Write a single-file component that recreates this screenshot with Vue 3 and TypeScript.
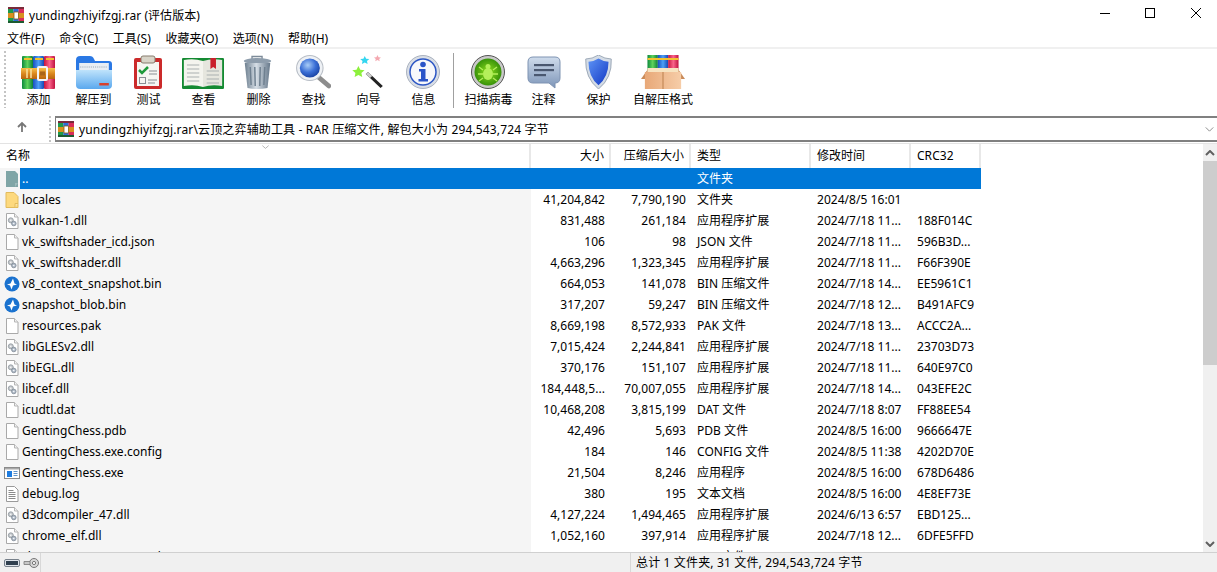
<script setup lang="ts">
interface Row { name: string; size: string; packed: string; type: string; time: string; crc: string; icon: string }
const r = (name: string, size: string, packed: string, type: string, time: string, crc: string, icon: string): Row => ({ name, size, packed, type, time, crc, icon })
const ext = '应用程序扩展'
const rows: Row[] = [
  r('locales', '41,204,842', '7,790,190', '文件夹', '2024/8/5 16:01', '', 'folder'),
  r('vulkan-1.dll', '831,488', '261,184', ext, '2024/7/18 11...', '188F014C', 'dll'),
  r('vk_swiftshader_icd.json', '106', '98', 'JSON 文件', '2024/7/18 11...', '596B3D...', 'file'),
  r('vk_swiftshader.dll', '4,663,296', '1,323,345', ext, '2024/7/18 11...', 'F66F390E', 'dll'),
  r('v8_context_snapshot.bin', '664,053', '141,078', 'BIN 压缩文件', '2024/7/18 14...', 'EE5961C1', 'bin'),
  r('snapshot_blob.bin', '317,207', '59,247', 'BIN 压缩文件', '2024/7/18 12...', 'B491AFC9', 'bin'),
  r('resources.pak', '8,669,198', '8,572,933', 'PAK 文件', '2024/7/18 13...', 'ACCC2A...', 'file'),
  r('libGLESv2.dll', '7,015,424', '2,244,841', ext, '2024/7/18 11...', '23703D73', 'dll'),
  r('libEGL.dll', '370,176', '151,107', ext, '2024/7/18 11...', '640E97C0', 'dll'),
  r('libcef.dll', '184,448,5...', '70,007,055', ext, '2024/7/18 14...', '043EFE2C', 'dll'),
  r('icudtl.dat', '10,468,208', '3,815,199', 'DAT 文件', '2024/7/18 8:07', 'FF88EE54', 'file'),
  r('GentingChess.pdb', '42,496', '5,693', 'PDB 文件', '2024/8/5 16:00', '9666647E', 'file'),
  r('GentingChess.exe.config', '184', '146', 'CONFIG 文件', '2024/8/5 11:38', '4202D70E', 'file'),
  r('GentingChess.exe', '21,504', '8,246', '应用程序', '2024/8/5 16:00', '678D6486', 'exe'),
  r('debug.log', '380', '195', '文本文档', '2024/8/5 16:00', '4E8EF73E', 'txt'),
  r('d3dcompiler_47.dll', '4,127,224', '1,494,465', ext, '2024/6/13 6:57', 'EBD125...', 'dll'),
  r('chrome_elf.dll', '1,052,160', '397,914', ext, '2024/7/18 12...', '6DFE5FFD', 'dll'),
  r('chrome_100_percent.pak', '', '', 'PAK 文件', '', '', 'file'),
]
const menus = ['文件(F)', '命令(C)', '工具(S)', '收藏夹(O)', '选项(N)', '帮助(H)']
const tools1 = ['add', 'extract', 'test', 'view', 'delete', 'find', 'wizard', 'info']
const tools2 = ['scan', 'comment', 'protect', 'sfx']
const labels: Record<string, string> = { add: '添加', extract: '解压到', test: '测试', view: '查看', delete: '删除', find: '查找', wizard: '向导', info: '信息', scan: '扫描病毒', comment: '注释', protect: '保护', sfx: '自解压格式' }
</script>

<template>
  <div class="win">
    <svg class="sprite" aria-hidden="true">
      <defs>
        <linearGradient id="gG" x1="0" x2="1" y1="0" y2="0"><stop offset="0" stop-color="#0d8a3c"/><stop offset=".5" stop-color="#5fd35c"/><stop offset="1" stop-color="#0e7f38"/></linearGradient>
        <linearGradient id="gB" x1="0" x2="1" y1="0" y2="0"><stop offset="0" stop-color="#1a4fc0"/><stop offset=".5" stop-color="#4ea0f5"/><stop offset="1" stop-color="#1747b5"/></linearGradient>
        <linearGradient id="gR" x1="0" x2="1" y1="0" y2="0"><stop offset="0" stop-color="#c8153f"/><stop offset=".5" stop-color="#f9648a"/><stop offset="1" stop-color="#c01240"/></linearGradient>
        <linearGradient id="gO" x1="0" x2="0" y1="0" y2="1"><stop offset="0" stop-color="#f6c04a"/><stop offset=".55" stop-color="#d8841c"/><stop offset="1" stop-color="#b8660f"/></linearGradient>
        <linearGradient id="gF" x1="0" x2="0" y1="0" y2="1"><stop offset="0" stop-color="#bfe3fb"/><stop offset="1" stop-color="#5aa8ee"/></linearGradient>
        <linearGradient id="gT" x1="0" x2="1" y1="0" y2="0"><stop offset="0" stop-color="#6d7f8f"/><stop offset=".45" stop-color="#d6dee6"/><stop offset="1" stop-color="#66788a"/></linearGradient>
        <linearGradient id="gS" x1="0" x2="0" y1="0" y2="1"><stop offset="0" stop-color="#cfdcec"/><stop offset="1" stop-color="#7d95b8"/></linearGradient>
        <linearGradient id="gH" x1="0" x2="1" y1="0" y2="1"><stop offset="0" stop-color="#5d93f5"/><stop offset="1" stop-color="#1238c4"/></linearGradient>
        <radialGradient id="gL" cx=".4" cy=".35" r=".7"><stop offset="0" stop-color="#a9cdf7"/><stop offset=".55" stop-color="#3b6fd6"/><stop offset="1" stop-color="#17409f"/></radialGradient>
        <radialGradient id="gV" cx=".5" cy=".5" r=".55"><stop offset="0" stop-color="#8fe01c"/><stop offset="1" stop-color="#2f8a08"/></radialGradient>
        <linearGradient id="gK" x1="0" x2="1" y1="0" y2="0"><stop offset="0" stop-color="#e8a878"/><stop offset="1" stop-color="#f6cda8"/></linearGradient>
      </defs>
      <symbol id="rar" viewBox="0 0 16 16">
        <rect x="0" y="0" width="5.4" height="16" fill="#1e9a4a"/><rect x="5.3" y="0" width="5.4" height="16" fill="#2a6fd8"/><rect x="10.6" y="0" width="5.4" height="16" fill="#d92c58"/>
        <rect x="0" y="0" width="16" height="2" fill="#7a2b3a"/><rect x="0" y="14" width="16" height="2" fill="#1c5a30"/>
        <rect x="0" y="6" width="16" height="5" fill="#d8901f"/><rect x="6" y="5" width="4.5" height="7" fill="#fff" stroke="#8d5a10" stroke-width=".8"/>
      </symbol>
      <symbol id="folder" viewBox="0 0 16 16">
        <path d="M2 0.5h8l4 4v11H2z" fill="#fdd97d" stroke="#e2bb5c"/><path d="M11 15.500v-4h3" fill="#fbe7a8" stroke="#e2bb5c"/>
      </symbol>
      <symbol id="up" viewBox="0 0 16 16">
        <path d="M2 0h9l3 3v13H2z" fill="#7fa5a6"/><path d="M11 16v-4h3" fill="#9dbabb"/>
      </symbol>
      <symbol id="file" viewBox="0 0 16 16">
        <path d="M2.500 .5h8l3.500 3.500v11.500h-11.500z" fill="#fff" stroke="#a9a9a9"/><path d="M10.500 .5v3.500h3.500" fill="#f2f2f2" stroke="#b5b5b5"/>
      </symbol>
      <symbol id="dll" viewBox="0 0 16 16">
        <path d="M2.500 .5h8l3.500 3.500v11.500h-11.500z" fill="#fff" stroke="#a9a9a9"/><path d="M10.500 .5v3.500h3.500" fill="#f2f2f2" stroke="#b5b5b5"/>
        <circle cx="6.800" cy="7.300" r="2.500" fill="#c4c8cc" stroke="#8e959c" stroke-width=".8"/><circle cx="9.800" cy="10.500" r="2.300" fill="#aeb9c6" stroke="#7d8894" stroke-width=".8"/><circle cx="6.800" cy="7.300" r=".8" fill="#fff"/><circle cx="9.800" cy="10.500" r=".7" fill="#fff"/>
      </symbol>
      <symbol id="bin" viewBox="0 0 16 16">
        <circle cx="8" cy="8" r="7.500" fill="#1a72cf"/><path d="M9 2.500L10.500 7.500 13 8.500 9 9.500 7.500 13.500 6 9.500 3 8.500 6.500 7.500z" fill="#fff"/>
      </symbol>
      <symbol id="exe" viewBox="0 0 16 16">
        <rect x=".5" y="2.500" width="15" height="11" fill="#fff" stroke="#8b8b8b"/><rect x="1" y="3" width="14" height="1.500" fill="#a8a8a8"/><rect x="3" y="6" width="5" height="6" fill="#1d7ce0"/><path d="M9.500 6.500h4M9.500 8.500h4M9.500 10.500h4" stroke="#5f93c9"/>
      </symbol>
      <symbol id="txt" viewBox="0 0 16 16">
        <path d="M2.500 .5h8l3.500 3.500v11.500h-11.500z" fill="#fff" stroke="#9a9a9a"/><path d="M4.500 4.500h5M4.500 6.500h7M4.500 8.500h7M4.500 10.500h7M4.500 12.500h7" stroke="#8a8a8a"/>
      </symbol>
    </svg>

    <header class="title">
      <svg class="ico16"><use href="#rar"/></svg>
      <span class="title-text">yundingzhiyifzgj.rar (评估版本)</span>
      <div class="caps">
        <svg class="cap" viewBox="0 0 46 30"><path d="M19 13.500h10" stroke="#000" fill="none"/></svg>
        <svg class="cap" viewBox="0 0 46 30"><rect x="18.500" y="8.500" width="9" height="9" stroke="#000" fill="none"/></svg>
        <svg class="cap" viewBox="0 0 46 30"><path d="M18 8l10 10M28 8L18 18" stroke="#000" fill="none"/></svg>
      </div>
    </header>

    <nav class="menu"><span v-for="m in menus" :key="m" class="menu-item">{{ m }}</span></nav>

    <section class="toolbar">
      <div class="grip"></div>
      <div v-for="t in tools1" :key="t" class="tool">
        <svg class="big" :class="'w-' + t" viewBox="0 0 34 34" preserveAspectRatio="none">
          <g v-if="t === 'add'">
            <rect x="1" y="1" width="11" height="33" rx="1" fill="url(#gG)"/><rect x="12" y="1" width="11" height="33" rx="1" fill="url(#gB)"/><rect x="23" y="1" width="11" height="33" rx="1" fill="url(#gR)"/>
            <rect x="3" y="3" width="8" height="2" fill="#f2c230"/><rect x="14" y="3" width="8" height="2" fill="#f2c230"/><rect x="25" y="3" width="8" height="2" fill="#f2c230"/>
            <rect x="0" y="13" width="34" height="11" fill="url(#gO)"/><path d="M6 14v9M10 14v9" stroke="#fbe2a2" stroke-width="1.500"/>
            <rect x="17" y="12" width="9" height="13" rx="1" fill="none" stroke="#f4f4f4" stroke-width="2"/><rect x="19" y="16.500" width="5" height="4" fill="#a9651a"/>
          </g>
          <g v-else-if="t === 'extract'">
            <path d="M0 5q0-4 4-4h9q3 0 4 3l1 2h13q3 0 3 3v8H0z" fill="#2a78e4"/>
            <rect x="3" y="8" width="28" height="12" fill="#e9eef4"/><path d="M4 12h26" stroke="#9aa7b4" stroke-dasharray="1 1"/>
            <path d="M0 15h34v15q0 4-4 4H4q-4 0-4-4z" fill="url(#gF)"/><rect x="22" y="28" width="9" height="2.500" fill="#d8412c"/>
          </g>
          <g v-else-if="t === 'test'">
            <rect x="3" y="3" width="28" height="31" rx="2" fill="#cb2a2a"/>
            <rect x="6" y="7" width="22" height="24" fill="#f6f6f2"/><rect x="10" y="1" width="14" height="7" rx="2" fill="#d8d4c8" stroke="#877d6e"/>
            <path d="M8 15l3 3 6-6" stroke="#1f9a3a" stroke-width="2.500" fill="none"/><path d="M18 16h8M18 19h8" stroke="#8a8f94"/>
            <rect x="8.500" y="22.500" width="6" height="6" fill="none" stroke="#8a8f94"/><path d="M17 25h9M17 28h7" stroke="#8a8f94"/>
          </g>
          <g v-else-if="t === 'view'">
            <rect x="0" y="3" width="34" height="31" fill="#148a32" rx="1"/>
            <path d="M1.500 5q8-2 15.500 1v26q-7-3-15.500-1z" fill="#f4f4ee"/><path d="M32.500 5q-8-2-15.500 1v26q7-3 15.500-1z" fill="#e6e6de"/>
            <path d="M4 10h10M4 14h10M4 18h10M4 22h10M4 26h10M20 16h10M20 20h10M20 24h10M20 28h10" stroke="#aab0b0"/><path d="M23 3h4.500v11l-2.250-2-2.250 2z" fill="#c9202c"/>
          </g>
          <g v-else-if="t === 'delete'">
            <path d="M11 4V1.500h11V4" fill="none" stroke="#7d8b99" stroke-width="1.500"/><ellipse cx="17" cy="6" rx="15" ry="3" fill="#8e9dac"/>
            <path d="M3 8h28l-3 25q-11 2-22 0z" fill="url(#gT)"/><path d="M9 12l1 18M14 12l.5 19M20 12l-.5 19M25 12l-1 18" stroke="#6f8090" stroke-width="1.600"/>
          </g>
          <g v-else-if="t === 'find'">
            <path d="M22 22l10 9" stroke="#8d8d8d" stroke-width="4.500" stroke-linecap="round"/>
            <circle cx="14" cy="13" r="12.500" fill="#eef1f5" stroke="#b8bec6"/><circle cx="14" cy="13" r="9.500" fill="url(#gL)"/>
          </g>
          <g v-else-if="t === 'wizard'">
            <path d="M15 18l14 14" stroke="#222" stroke-width="3"/><path d="M15 18l4 4" stroke="#ccc" stroke-width="3"/>
            <path d="M7 11l1.800 3.700 4 .5-3 2.800.8 4-3.600-2-3.600 2 .8-4-3-2.800 4-.5z" fill="#8df03c"/>
            <path d="M13 1l1.300 2.700 3 .4-2.200 2 .6 3-2.700-1.500-2.700 1.500.6-3-2.200-2 3-.4z" fill="#34d6f0"/>
            <path d="M25 0l1 2.200 2.300.3-1.700 1.500.5 2.300-2.100-1.200-2.100 1.200.5-2.300-1.700-1.500 2.300-.3z" fill="#f4a8b0"/>
          </g>
          <g v-else>
            <circle cx="17" cy="17" r="16.500" fill="#d9dee6" stroke="#aab2bf"/><circle cx="17" cy="17" r="13" fill="#f7f8fb" stroke="#2c56c4" stroke-width="1.500"/>
            <circle cx="17" cy="9.500" r="2.800" fill="#2a54c8"/><path d="M13 14h6.500v10H22v2.500H12.500V24H15v-7.500h-2z" fill="#2a54c8"/>
          </g>
        </svg>
        <span class="tool-label">{{ labels[t] }}</span>
      </div>
      <div class="tsep"></div>
      <div v-for="t in tools2" :key="t" class="tool" :class="{ wide: t === 'sfx' }">
        <svg class="big" :class="'w-' + t" viewBox="0 0 34 34" preserveAspectRatio="none">
          <g v-if="t === 'scan'">
            <circle cx="17" cy="17" r="16.500" fill="#c9c9c9" stroke="#555"/><circle cx="17" cy="17" r="13.500" fill="url(#gV)"/>
            <ellipse cx="17" cy="19" rx="5" ry="6" fill="#b4ef5a"/><circle cx="17" cy="11.500" r="2.500" fill="#b4ef5a"/>
            <path d="M12 15l-4-3M22 15l4-3M12 19H7M22 19h5M12 23l-4 3M22 23l4 3" stroke="#b4ef5a" stroke-width="1.300"/>
          </g>
          <g v-else-if="t === 'comment'">
            <path d="M6 2h22q5 0 5 5v16q0 5-5 5v5l-6-5H6q-5 0-5-5V7q0-5 5-5z" fill="url(#gS)" stroke="#7e93b2"/>
            <rect x="7" y="9" width="20" height="2.200" fill="#4a5870"/><rect x="7" y="14" width="20" height="2.200" fill="#4a5870"/><rect x="7" y="19" width="12" height="2.200" fill="#4a5870"/>
          </g>
          <g v-else-if="t === 'protect'">
            <path d="M17 0q7 4 14 4 1 19-14 30Q2 23 3 4q7 0 14-4z" fill="#d4dce6" stroke="#9aa7b6"/>
            <path d="M17 3.500q5 3 11 3.200 0 15-11 23.500Q6 22 6 6.700q6-.2 11-3.200z" fill="url(#gH)"/>
          </g>
          <g v-else>
            <rect x="5" y="0" width="8" height="17" fill="url(#gG)"/><rect x="13" y="0" width="8" height="17" fill="url(#gB)"/><rect x="21" y="0" width="8" height="17" fill="url(#gR)"/>
            <path d="M5 4h24" stroke="#f2c230" stroke-width="2"/>
            <path d="M0 24l6-11h22l6 11z" fill="#c98a58"/><path d="M5 13h24v4H5z" fill="#f7e3c0"/><rect x="3" y="17" width="28" height="17" fill="url(#gK)"/><path d="M17 17v17" stroke="#c88d5c"/>
          </g>
        </svg>
        <span class="tool-label">{{ labels[t] }}</span>
      </div>
    </section>

    <section class="address">
      <div class="addr-left">
        <svg class="arrow" viewBox="0 0 12 12"><path d="M6 11V2M2 6l4-4 4 4" stroke="#777" stroke-width="1.800" fill="none"/></svg>
      </div>
      <div class="grip small"></div>
      <div class="addr-box">
        <svg class="ico16"><use href="#rar"/></svg>
        <span class="addr-text">yundingzhiyifzgj.rar\云顶之弈辅助工具 - RAR 压缩文件, 解包大小为 294,543,724 字节</span>
        <svg class="chev" viewBox="0 0 10 6"><path d="M.5.5L5 5 9.500.5" stroke="#777" fill="none"/></svg>
      </div>
    </section>

    <main class="body">
      <div class="list">
        <div class="head grid">
          <div class="h">名称<svg class="sort" viewBox="0 0 10 5"><path d="M.5.5L5 4.500 9.500.5" stroke="#999" fill="none"/></svg></div>
          <div class="h right">大小</div>
          <div class="h right p5">压缩后大小</div>
          <div class="h">类型</div>
          <div class="h">修改时间</div>
          <div class="h">CRC32</div>
        </div>
        <div class="rows">
          <div class="namebg"></div>
          <div class="row grid sel">
            <div class="c name"><svg class="ico16"><use href="#up"/></svg><span class="nm">..</span></div>
            <div class="c"></div><div class="c"></div><div class="c">文件夹</div><div class="c"></div><div class="c"></div>
          </div>
          <div v-for="x in rows" :key="x.name" class="row grid">
            <div class="c name"><svg class="ico16"><use :href="'#' + x.icon"/></svg><span class="nm">{{ x.name }}</span></div>
            <div class="c right">{{ x.size }}</div>
            <div class="c right p5">{{ x.packed }}</div>
            <div class="c">{{ x.type }}</div>
            <div class="c">{{ x.time }}</div>
            <div class="c">{{ x.crc }}</div>
          </div>
        </div>
      </div>
      <aside class="scroll">
        <div class="sbtn"><svg viewBox="0 0 10 6"><path d="M1 5l4-4 4 4" stroke="#606060" stroke-width="2" fill="none"/></svg></div>
        <div class="thumb"></div>
        <div class="track"></div>
        <div class="sbtn"><svg viewBox="0 0 10 6"><path d="M1 1l4 4 4-4" stroke="#606060" stroke-width="2" fill="none"/></svg></div>
      </aside>
    </main>

    <footer class="status">
      <div class="st-left">
        <svg class="drive" viewBox="0 0 16 10"><rect x=".5" y="1.500" width="15" height="7" rx="1.500" fill="#dfe4ea" stroke="#77808a"/><rect x="2" y="3" width="12" height="4" fill="#30404f"/></svg>
        <svg class="key" viewBox="0 0 16 12"><circle cx="11" cy="6" r="4.500" fill="#d8d8d8" stroke="#777"/><circle cx="11" cy="6" r="1.600" fill="#fff" stroke="#777"/><path d="M1 4.500h6v3H1z" fill="#c8c8c8" stroke="#777" stroke-width=".8"/></svg>
      </div>
      <div class="st-main">
        <div class="st-spacer"></div>
        <div class="st-text">总计 1 文件夹, 31 文件, 294,543,724 字节</div>
      </div>
    </footer>
  </div>
</template>

<style>
html, body { margin: 0; background: #fff; overflow: hidden; }
</style>

<style scoped>
.win { width: 1217px; height: 572px; display: flex; flex-direction: column; background: #fff; overflow: hidden; font: 12px "Noto Sans", "Noto Sans CJK SC", sans-serif; letter-spacing: .04px; color: #000; position: relative; }
.sprite { position: absolute; width: 0; height: 0; }
.ico16 { width: 16px; height: 16px; flex: none; }
.title { height: 30px; flex: none; display: flex; align-items: center; padding-left: 8px; }
.title-text { margin-left: 5px; }
.caps { margin-left: auto; margin-right: -2px; display: flex; }
.cap { width: 46px; height: 30px; }
.menu { height: 17px; flex: none; display: flex; padding-left: 7px; line-height: 17px; border-bottom: 2px solid #f0f0f0; }
.menu-item { margin-right: 14.6px; }
.toolbar { height: 66px; flex: none; display: flex; }
.grip { width: 2px; margin: 2px 5px 7px 4px; background: repeating-linear-gradient(#c4c4c4 0 2px, transparent 2px 4px); flex: none; }
.tool { width: 55px; flex: none; display: flex; flex-direction: column; align-items: center; padding-top: 6px; box-sizing: border-box; }
.tool.wide { width: 74px; }
.big { width: 34px; height: 34px; flex: none; }
.w-view { width: 42px; }
.w-extract, .w-find, .w-wizard { width: 36px; }
.w-sfx { width: 44px; }
.w-delete, .w-protect { width: 31px; }
.w-add, .w-test, .w-view, .w-delete, .w-find, .w-info, .w-scan { margin-right: 2px; }
.tool-label { margin-top: 2px; line-height: 17px; }
.tsep { width: 1px; background: #a0a0a0; margin: 4px 7px 7px 2px; flex: none; }
.address { height: 26px; flex: none; display: flex; margin-top: 1px; }
.addr-left { width: 48px; flex: none; display: flex; align-items: center; justify-content: center; padding: 0 4px 4px 0; box-sizing: border-box; }
.arrow { width: 12px; height: 12px; }
.grip.small { margin: 0 4px 0 1px; }
.addr-box { flex: 1; display: flex; align-items: center; border-top: 2px solid #808080; border-bottom: 2px solid #808080; border-left: 1px solid #808080; padding-left: 2px; }
.addr-text { margin-left: 5px; letter-spacing: .15px; }
.chev { width: 9px; height: 5px; margin-left: auto; margin-right: 3px; }
.body { flex: 1; min-height: 0; display: flex; padding-top: 1px; }
.body::before { content: ""; position: absolute; left: 0; right: 0; height: 1px; background: #e3e3e3; }
.list { flex: 1; min-width: 0; overflow: hidden; display: flex; flex-direction: column; padding-top: 1px; }
.grid { display: grid; grid-template-columns: 531px 80px 80px 120px 100px 70px; width: 981px; }
.head { height: 24px; flex: none; }
.h { border-right: 2px solid #e8e8e8; box-sizing: border-box; padding: 0 5px 0 6px; line-height: 24px; position: relative; }
.sort { position: absolute; width: 7px; height: 4px; top: 1px; left: 262px; }
.right { text-align: right; }
.rows { flex: 1; min-height: 0; overflow: hidden; position: relative; }
.namebg { position: absolute; left: 0; top: 0; bottom: 0; width: 531px; background: #f5f5f5; }
.row { height: 21px; line-height: 21px; position: relative; }
.c { padding: 0 6px; white-space: nowrap; overflow: hidden; }
.c.p5 { padding-right: 5px; }
.c.name { padding: 0 0 0 4px; display: flex; align-items: center; }
.nm { margin-left: 2px; }
.sel { background: linear-gradient(90deg, transparent 20px, #0078d7 20px); color: #fff; }
.scroll { width: 14px; flex: none; display: flex; flex-direction: column; background: #f0f0f0; margin-top: 1px; }
.sbtn { height: 17px; flex: none; display: flex; align-items: center; justify-content: center; }
.sbtn svg { width: 10px; height: 6px; }
.thumb { height: 204px; background: #cdcdcd; flex: none; }
.track { flex: 1; }
.status { height: 19px; flex: none; display: flex; background: #f0f0f0; border-top: 1px solid #d0d0d0; box-sizing: content-box; line-height: 20px; }
.st-left { width: 41px; flex: none; display: flex; align-items: center; padding-left: 4px; box-sizing: border-box; border-right: 1px solid #d8d8d8; }
.drive { width: 16px; height: 10px; }
.key { width: 16px; height: 12px; margin-left: 3px; }
.st-main { flex: 1; display: flex; }
.st-spacer { width: 589px; flex: none; border-right: 1px solid #d8d8d8; }
.st-text { padding-left: 5px; letter-spacing: .15px; }
</style>
